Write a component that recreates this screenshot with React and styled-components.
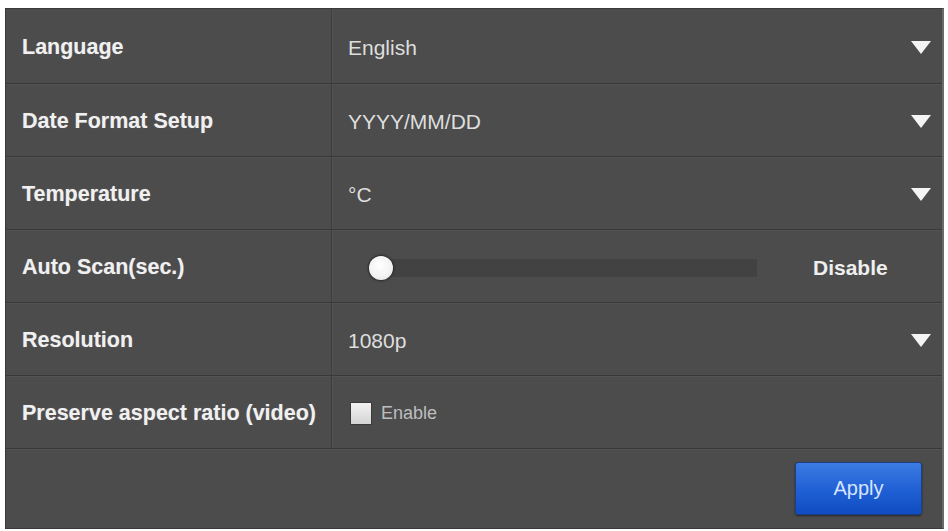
import React from "react";
import styled, { createGlobalStyle } from "styled-components";

const GlobalStyle = createGlobalStyle`
  html, body {
    margin: 0;
    padding: 0;
    background: #ffffff;
    font-family: "Liberation Sans", Arial, Helvetica, sans-serif;
  }
`;

const rows = [
  { label: "Language", value: "English", kind: "select" },
  { label: "Date Format Setup", value: "YYYY/MM/DD", kind: "select" },
  { label: "Temperature", value: "°C", kind: "select" },
  { label: "Auto Scan(sec.)", value: "Disable", kind: "slider" },
  { label: "Resolution", value: "1080p", kind: "select" },
  { label: "Preserve aspect ratio (video)", value: "Enable", kind: "check" }
];

function App() {
  return (
    <>
      <GlobalStyle />
      <Panel>
        {rows.map((row) => (
          <Row key={row.label}>
            <Label>{row.label}</Label>
            <Cell>
              {row.kind === "select" && (
                <>
                  <Value>{row.value}</Value>
                  <Arrow />
                </>
              )}
              {row.kind === "slider" && (
                <>
                  <Slider>
                    <Track />
                    <Knob />
                  </Slider>
                  <SliderValue>{row.value}</SliderValue>
                </>
              )}
              {row.kind === "check" && (
                <>
                  <CheckBox />
                  <CheckLabel>{row.value}</CheckLabel>
                </>
              )}
            </Cell>
          </Row>
        ))}
        <Footer>
          <ApplyButton>Apply</ApplyButton>
        </Footer>
      </Panel>
    </>
  );
}

export default App;

const Panel = styled.div`
  margin: 8px 4px 0 5px;
  height: 521px;
  box-sizing: border-box;
  background: #4c4c4c;
  border: 1px solid #3a3a3a;
  border-right: 2px solid #6a6a6a;
  display: flex;
  flex-direction: column;
`;

const Row = styled.div`
  display: grid;
  grid-template-columns: 325px 1fr;
  height: 73px;
  padding-top: 3px;
  box-sizing: border-box;
  border-bottom: 1px solid #383838;
  box-shadow: 0 1px 0 #535353;

  &:first-child {
    height: 75px;
  }
`;

const Label = styled.div`
  display: flex;
  align-items: center;
  padding-left: 16px;
  color: #f0f0f0;
  font-size: 21.5px;
  font-weight: bold;
  white-space: nowrap;
  text-shadow: 0 0 1px rgba(255, 255, 255, 0.3);
`;

const Cell = styled.div`
  display: flex;
  align-items: center;
  padding: 0 10px 0 16px;
  margin-top: -3px;
  padding-top: 3px;
  border-left: 1px solid #3c3c3c;
  box-shadow: inset 1px 0 0 #545454;
`;

const Value = styled.span`
  flex: 1;
  color: #dedede;
  font-size: 21px;
`;

const Arrow = styled.span`
  width: 0;
  height: 0;
  border-left: 10px solid transparent;
  border-right: 10px solid transparent;
  border-top: 13px solid #f4f4f4;
  margin-right: 1px;
`;

const Slider = styled.div`
  position: relative;
  width: 388px;
  height: 26px;
  margin-left: 21px;
  display: flex;
  align-items: center;
`;

const Track = styled.div`
  margin-left: 13px;
  flex: 1;
  height: 18px;
  background: #424242;
`;

const Knob = styled.div`
  position: absolute;
  left: 0;
  top: 1px;
  width: 24px;
  height: 24px;
  border-radius: 50%;
  background: radial-gradient(circle at 45% 40%, #ffffff 0%, #f2f2f2 60%, #d8d8d8 100%);
  box-shadow: 0 0 2px 1px #2a2a2a;
`;

const SliderValue = styled.span`
  margin-left: 56px;
  color: #efefef;
  font-size: 21px;
  font-weight: bold;
`;

const CheckBox = styled.span`
  width: 20px;
  height: 21px;
  margin-left: 2px;
  background: linear-gradient(#f2f2f2, #d4d4d4);
  border: 1px solid #3a3a3a;
  border-radius: 1px;
`;

const CheckLabel = styled.span`
  margin-left: 9px;
  color: #bdbdbd;
  font-size: 18px;
`;

const Footer = styled.div`
  flex: 1;
  display: flex;
  align-items: center;
  justify-content: flex-end;
  padding-right: 20px;
`;

const ApplyButton = styled.button`
  width: 127px;
  height: 53px;
  border: 1px solid #1d3f86;
  border-radius: 3px;
  background: linear-gradient(#3b7be2, #1f5fd4 55%, #0f4cc2);
  box-shadow: 0 1px 2px rgba(0, 0, 0, 0.5);
  color: #d6e4ff;
  font-family: "Liberation Sans", Arial, sans-serif;
  font-size: 20px;
  cursor: pointer;
`;
